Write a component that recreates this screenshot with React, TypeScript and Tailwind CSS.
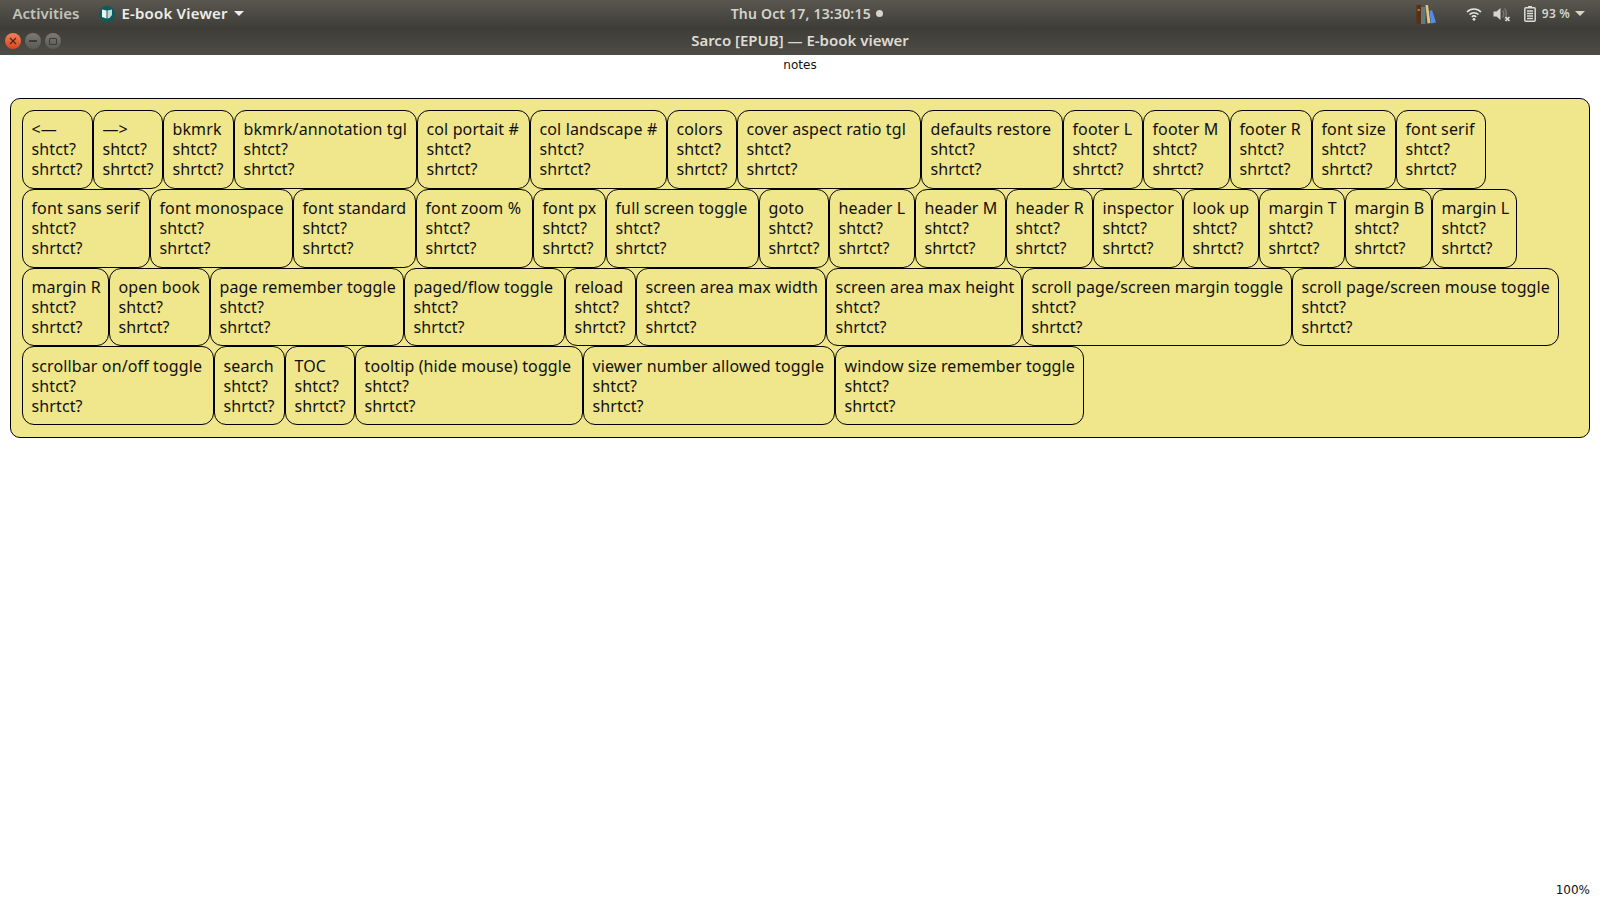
const cards: [string, string][] = [
  ["<—", "w-[71px]"],["—>", "w-[70px]"],["bkmrk", "w-[71px]"],["bkmrk/annotation tgl", "w-[183px]"],["col portait #", "w-[113px]"],["col landscape #", "w-[137px]"],["colors", "w-[70px]"],["cover aspect ratio tgl", "w-[184px]"],["defaults restore", "w-[142px]"],["footer L", "w-[80px]"],["footer M", "w-[87px]"],["footer R", "w-[82px]"],["font size", "w-[84px]"],["font serif", "w-[90px]"],
  ["font sans serif", "w-[128px]"],["font monospace", "w-[143px]"],["font standard", "w-[123px]"],["font zoom %", "w-[117px]"],["font px", "w-[73px]"],["full screen toggle", "w-[153px]"],["goto", "w-[70px]"],["header L", "w-[86px]"],["header M", "w-[91px]"],["header R", "w-[87px]"],["inspector", "w-[90px]"],["look up", "w-[76px]"],["margin T", "w-[86px]"],["margin B", "w-[87px]"],["margin L", "w-[85px]"],
  ["margin R", "w-[87px]"],["open book", "w-[101px]"],["page remember toggle", "w-[194px]"],["paged/flow toggle", "w-[161px]"],["reload", "w-[71px]"],["screen area max width", "w-[190px]"],["screen area max height", "w-[196px]"],["scroll page/screen margin toggle", "w-[270px]"],["scroll page/screen mouse toggle", "w-[267px]"],
  ["scrollbar on/off toggle", "w-[192px]"],["search", "w-[71px]"],["TOC", "w-[70px]"],["tooltip (hide mouse) toggle", "w-[228px]"],["viewer number allowed toggle", "w-[252px]"],["window size remember toggle", "w-[249px]"],
];

function Calibre() {
  return (
    <svg width="18" height="18" viewBox="0 0 18 18">
      <circle cx="9" cy="9" r="8" fill="#0d5b5c" />
      <path d="M4 4.5 L8.5 5.5 V13.5 L4 12 Z" fill="#eef4f2" />
      <path d="M9.5 5.5 L14 4.5 V10 L11.5 13 L9.5 13.5 Z" fill="#c4dad7" />
    </svg>
  );
}

function Books() {
  return (
    <svg width="22" height="24" viewBox="0 0 22 24">
      <rect x="0.5" y="3" width="4.5" height="19" fill="#5c2f10" />
      <rect x="1.5" y="7" width="2.5" height="2" fill="#a8753a" />
      <rect x="5" y="5" width="4.5" height="17" fill="#607a7c" />
      <path d="M9.5 3 L12 3 L14.5 21 L11.5 21.5 Z" fill="#e3c27a" />
      <path d="M13.5 9 L16 8 L20 20.5 L15 21.5 Z" fill="#4f8ef0" />
    </svg>
  );
}

function Wifi() {
  return (
    <svg width="16" height="14" viewBox="0 0 16 14" fill="none" stroke="#e6e5e0" strokeWidth="1.6">
      <path d="M1 5 C5 1 11 1 15 5" />
      <path d="M3.5 7.5 C6 5.2 10 5.2 12.5 7.5" />
      <path d="M5.8 9.8 C7 8.8 9 8.8 10.2 9.8" />
      <circle cx="8" cy="12.3" r="1.4" fill="#e6e5e0" stroke="none" />
    </svg>
  );
}

function Speaker() {
  return (
    <svg width="18" height="16" viewBox="0 0 18 16" fill="none">
      <path d="M0.5 5.5 H3.5 L7.5 2 V14 L3.5 10.5 H0.5 Z" fill="#d6d5d0" />
      <path d="M9.5 4.5 C11 6.5 11 9.5 9.5 11.5 M11.5 2.5 C14 5.5 14 10.5 11.5 13.5" stroke="#77756f" strokeWidth="1.5" />
      <path d="M12.5 11 L16.5 15 M16.5 11 L12.5 15" stroke="#e6e5e0" strokeWidth="1.6" />
    </svg>
  );
}

function Battery() {
  return (
    <svg width="12" height="16" viewBox="0 0 12 16" fill="none">
      <rect x="4" y="0" width="4" height="2" fill="#dcdbd6" />
      <rect x="0.8" y="1.8" width="10.4" height="13.4" rx="1" stroke="#dcdbd6" strokeWidth="1.5" />
      <path d="M3 5 H9 M3 7.5 H9 M3 10 H9 M3 12.5 H9" stroke="#dcdbd6" strokeWidth="1.3" />
    </svg>
  );
}

export default function App() {
  return (
    <div className="w-[1600px] h-[900px] flex flex-col bg-white overflow-hidden font-['Noto_Sans',sans-serif]">
      <div className="h-[27px] flex items-center bg-gradient-to-b from-[#5a574f] to-[#3f3e39] text-[15px] font-semibold">
        <div className="flex-1 flex items-center pl-[12.5px]">
          <span className="text-[#c3c2bb]">Activities</span>
          <span className="ml-[19px]"><Calibre /></span>
          <span className="ml-[5px] text-[#eeeeea] tracking-[0.2px]">E-book Viewer</span>
          <span className="ml-[6px] w-0 h-0 border-x-[5px] border-x-transparent border-t-[5px] border-t-[#eeeeea]" />
        </div>
        <div className="ml-[16px] flex items-center gap-[5px] text-[#d5d4cd] text-[14px] tracking-[0.2px]">
          <span>Thu Oct 17, 13:30:15</span>
          <span className="w-[7px] h-[7px] rounded-full bg-[#d5d4cd]" />
        </div>
        <div className="flex-1 flex items-center justify-end pr-[15px] text-[#d5d4cd]">
          <Books />
          <span className="ml-[28px]"><Wifi /></span>
          <span className="ml-[11px]"><Speaker /></span>
          <span className="ml-[13px]"><Battery /></span>
          <span className="ml-[6px] text-[12px] tracking-[0.2px]">93 %</span>
          <span className="ml-[5px] w-0 h-0 border-x-[5px] border-x-transparent border-t-[5px] border-t-[#d5d4cd]" />
        </div>
      </div>
      <div className="h-[28px] flex items-center bg-gradient-to-b from-[#3d3c37] to-[#4e4c46]">
        <div className="flex-1 flex items-center gap-[4px] pl-[5px]">
          <span className="w-[16px] h-[16px] rounded-full bg-gradient-to-b from-[#f0805a] to-[#d8461a] flex items-center justify-center">
            <svg width="8" height="8" viewBox="0 0 8 8" stroke="#4a2414" strokeWidth="1.2"><path d="M1 1 L7 7 M7 1 L1 7" /></svg>
          </span>
          <span className="w-[16px] h-[16px] rounded-full bg-gradient-to-b from-[#7c7a73] to-[#5a5952] flex items-center justify-center">
            <span className="w-[8px] h-[1.5px] bg-[#3c3b37]" />
          </span>
          <span className="w-[16px] h-[16px] rounded-full bg-gradient-to-b from-[#7c7a73] to-[#5a5952] flex items-center justify-center">
            <span className="w-[8px] h-[7px] border border-[#3c3b37] rounded-[1px]" />
          </span>
        </div>
        <span className="pb-[2px] text-[15px] font-semibold text-[#dfdbd2]">Sarco [EPUB] — E-book viewer</span>
        <div className="flex-1 pl-[5px]" />
      </div>
      <div className="h-[18px] mt-[1px] flex justify-center items-center text-[12px] leading-[18px] text-[#111111] font-['DejaVu_Sans',sans-serif]">notes</div>
      <div className="mt-[24px] mx-[10px] h-[340px] rounded-[10px] border border-black bg-[#f0e68c] pl-[11px] pt-[11.4px]">
        <div className="flex flex-wrap content-start">
          {cards.map(([label, w], i) => (
            <div key={i} className={`${w} ${i >= 38 ? "pt-[9px]" : "pt-[8px]"} h-[78.67px] pl-[8.5px] border border-black rounded-[12px] bg-[#f0e68c] text-[16px] leading-[20px] tracking-[0.12px] text-[#111111] whitespace-nowrap overflow-hidden`}>
              <div>{label}</div>
              <div>shtct?</div>
              <div>shrtct?</div>
            </div>
          ))}
        </div>
      </div>
      <div className="flex-1 flex items-end justify-end pr-[10px] pb-[1px] text-[12px] leading-[18px] text-[#111111] font-['DejaVu_Sans',sans-serif]">100%</div>
    </div>
  );
}
